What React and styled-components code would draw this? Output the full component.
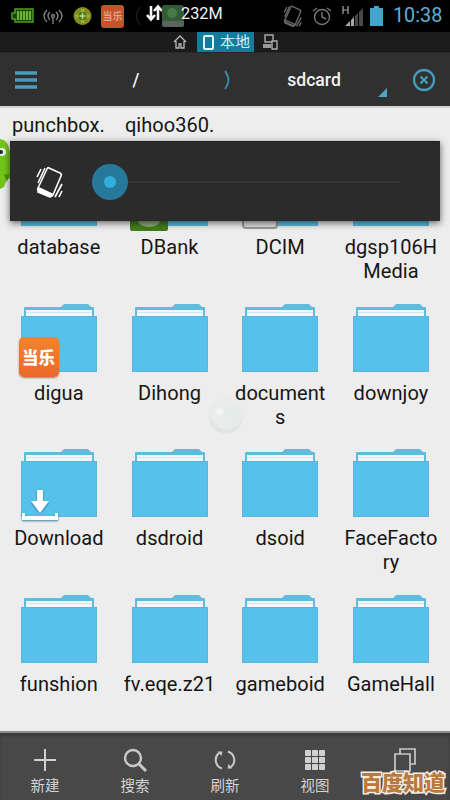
import React from "react";
import styled, { createGlobalStyle } from "styled-components";

const Global = createGlobalStyle`
  * { box-sizing: border-box; }
  body { margin: 0; background: #ededed; }
  svg { display: block; flex: none; overflow: visible; }
`;
const Screen = styled.div`
  position: relative; width: 450px; height: 800px; overflow: hidden;
  display: flex; flex-direction: column; background: #ededed;
  font-family: Roboto, "Noto Sans CJK SC", sans-serif;
`;
const StatusBar = styled.header`
  height: 32px; flex: none; background: #000; display: flex; align-items: center;
  justify-content: space-between; padding: 0 8px 0 11px;
`;
const StatusGroup = styled.div`
  display: flex; align-items: center; height: 32px;
`;
const StatusIcon = styled.div`
  width: ${(p) => p.$w}px; margin-left: ${(p) => p.$gap || 0}px; flex: none;
`;
const AppBadge = styled.div`
  width: 23px; height: 23px; margin-left: 9px; border-radius: 3px; background: #c4532b;
  color: #e1a188; font-size: 10px; line-height: 23px; text-align: center; font-weight: 700;
  white-space: nowrap;
`;
const Memory = styled.span`
  color: #f2f2f2; font-size: 16.3px; line-height: 20px; margin: -5px 0 0 -3px; z-index: 1;
`;
const Clock = styled.span`
  color: #5cb2cf; font-size: 19.8px; line-height: 32px; margin-left: 10px; width: 49px;
  white-space: nowrap;
`;
const TabBar = styled.nav`
  height: 20px; flex: none; background: #1b1b1b; display: flex; align-items: center;
  padding-left: 173px;
`;
const ActiveTab = styled.div`
  margin-left: 10px; width: 57px; height: 20px; background: #137c9c; color: #d4edf5;
  display: flex; align-items: center; gap: 6px; padding-left: 6px; font-size: 15px;
  line-height: 19px; white-space: nowrap; margin-right: 9px;
`;
const PathBar = styled.div`
  height: 54px; flex: none; background: #303030; border-top: 1px solid #292929;
  display: grid; grid-template-columns: 52px 168px 14px 160px 56px; align-items: center;
  color: #f3f3f3; font-size: 17.6px; font-weight: 500;
`;
const PathCell = styled.div`
  display: flex; align-items: center; justify-content: center;
`;
const Files = styled.main`
  flex: 1; min-height: 0; overflow: hidden; border-top: 2px solid #d3d3d3;
`;
const ScrolledLabels = styled.div`
  display: flex; height: 50px; padding: 5px 0 0 12px; gap: 20px;
`;
const Grid = styled.div`
  display: grid; grid-template-columns: repeat(4, 110.7px); grid-auto-rows: 145.7px;
  padding-left: 3.5px;
`;
const FileItem = styled.div`
  display: flex; flex-direction: column; align-items: center; position: relative;
`;
const Label = styled.div`
  color: #151515; font-size: 20px; line-height: 24px; letter-spacing: 0.05px; text-align: center;
  white-space: pre-line; margin-top: ${(p) => (p.$flush ? 0 : 8)}px;
`;
const Corner = styled.div`
  position: absolute; left: ${(p) => p.$left || 15}px; bottom: ${(p) => p.$bottom}px;
`;
const GameBadge = styled.div`
  width: 40px; height: 40px; border-radius: 5px; background: linear-gradient(#f18430, #ed672c);
  color: #fff; font: 900 16.5px/40px "Noto Sans CJK SC", sans-serif; text-align: center;
  white-space: nowrap; box-shadow: 0 1px 2px #a78265;
`;
const DriveBadge = styled.div`
  width: 38px; height: 40px; background: #437d1b; border-radius: 2px;
  display: flex; align-items: flex-end; justify-content: center; padding-bottom: 3px;
`;
const CameraBadge = styled.div`
  width: 36px; height: 36px; border: 2px solid #999; border-radius: 4px; background: #dedede;
`;
const BottomBar = styled.footer`
  height: 69px; flex: none; background: #484848; border-top: 2px solid #8c8c8c;
  box-shadow: inset 0 3px 3px #3c3c3c; display: grid; grid-template-columns: repeat(5, 90px);
`;
const Action = styled.button`
  border: 0; padding: 15px 0 0; background: none; color: #d4d4d4; display: flex;
  flex-direction: column; align-items: center; font: 400 14.5px/20px "Noto Sans CJK SC", sans-serif;
  gap: 3px;
`;
const VolumePanel = styled.section`
  position: absolute; left: 10px; top: 141px; width: 430px; height: 80px; background: #2b2b2b;
  border-top: 1px solid #202020; box-shadow: 0 2px 7px rgba(0,0,0,.6);
  display: flex; align-items: center; padding-left: 25px;
`;
const Slider = styled.div`
  margin-left: 27px; width: 320px; height: 36px; display: flex; align-items: center;
`;
const Thumb = styled.div`
  width: 36px; height: 36px; border-radius: 50%; background: #27799b; display: grid;
  place-items: center; flex: none;
`;
const ThumbCore = styled.div`
  width: 12px; height: 12px; border-radius: 50%; background: #35addc;
`;
const Track = styled.div`
  height: 2px; width: 272px; background: #363636;
`;
const Monster = styled.div`
  position: absolute; left: 0; top: 138px;
`;
const TouchDot = styled.div`
  position: absolute; left: 209px; top: 399px; width: 34px; height: 34px; border-radius: 50%;
  background: radial-gradient(circle at 60% 38%, #e4ecea 15%, #e9eceb 60%, #e5e7e6 75%);
  box-shadow: inset 0 -3px 3px #dfe1e0, 0 0 2px #e2e2e2;
  display: grid; place-items: center;
`;
const TouchGlint = styled.div`
  width: 7px; height: 7px; border-radius: 50%; background: #f5f7f7; margin: -10px 0 0 -14px;
  filter: blur(1px);
`;
const Watermark = styled.div`
  position: absolute; left: 361px; top: 767px; width: 88px; height: 28px; color: #b9793f;
  font: 900 21px/28px "Noto Sans CJK SC", sans-serif; white-space: nowrap;
  -webkit-text-stroke: 3px #f5eee1; paint-order: stroke fill;
`;
const DownloadArt = styled.svg`
  filter: drop-shadow(0 1px 1px #347d9b);
`;

const FolderIcon = () => (
  <svg width="76" height="69" viewBox="0 0 76 69">
    <path d="M3 12V4q0-1 1-1h36l3-3h24l3 3h2q1 0 1 1v8z" fill="#60bcdc" />
    <path d="M5 6h66v6H5z" fill="#f2f8fa" />
    <path d="M5 8.5h66" stroke="#d2e7ed" />
    <path d="M0 12h76v56H0z" fill="#56c1ea" />
    <path d="M.5 12v56M75.5 12v56M0 12.5h76M0 67.5h76" stroke="#5ab5d9" />
  </svg>
);
const DownloadIcon = () => (
  <DownloadArt width="38" height="34" viewBox="0 0 38 34">
    <path d="M16 2h6v11h6l-9 12-9-12h6zM1 25h3v3h30v-3h3v7H1z" fill="#fff" />
  </DownloadArt>
);
const PhoneShake = ({ dim }) => (
  <svg width={dim ? 22 : 30} height={dim ? 22 : 32} viewBox="0 0 30 32" fill="none" stroke={dim ? "#686868" : "#fff"} strokeWidth={dim ? 2 : 1.6}>
    <path d="m14 2 11 5q2 1 1 3l-8 19q-1 2-3 1L4 25q-2-1-1-3L12 3q1-2 2-1z" />
    <path d="m4 22 13 6-2 3-12-5z" fill={dim ? "none" : "#fff"} />
    <path d="M10 2 3 17M6 3 2 11M27 18l-7 13M27 25l-3 6" />
  </svg>
);

const files = [
  ["database"], ["DBank", "drive"], ["DCIM", "camera"], ["dgsp106H\nMedia"],
  ["digua", "game"], ["Dihong"], ["document\ns"], ["downjoy"],
  ["Download", "download"], ["dsdroid"], ["dsoid"], ["FaceFacto\nry"],
  ["funshion"], ["fv.eqe.z21"], ["gameboid"], ["GameHall"],
];

const Emblem = ({ kind }) => {
  if (kind === "game") return <Corner $bottom={72}><GameBadge>当乐</GameBadge></Corner>;
  if (kind === "download") return <Corner $left={17} $bottom={73}><DownloadIcon /></Corner>;
  if (kind === "drive") return <Corner $left={16} $bottom={73}><DriveBadge><svg width="24" height="14"><ellipse cx="12" cy="7" rx="11" ry="6" fill="#8fac79" /></svg></DriveBadge></Corner>;
  if (kind === "camera") return <Corner $left={17} $bottom={75}><CameraBadge /></Corner>;
  return null;
};

const actions = [
  { id: "new", label: "新建", icon: <svg width="24" height="24" stroke="#d0d0d0" strokeWidth="2"><path d="M12 1v22M1 12h22" /></svg> },
  { id: "search", label: "搜索", icon: <svg width="24" height="24" fill="none" stroke="#c9c9c9"><circle cx="10" cy="10" r="8" strokeWidth="2.4" /><path d="m16 16 7 7" strokeWidth="3" /></svg> },
  { id: "refresh", label: "刷新", icon: <svg width="24" height="24" fill="none" stroke="#c9c9c9" strokeWidth="2"><path d="M9 20.5A9 9 0 0 1 6 5M15 3.5a9 9 0 0 1 3 15.5" /><path d="M4.5 3.5h5l-1 4.5zM19.5 20.5h-5l1-4.5z" fill="#c9c9c9" stroke="none" /></svg> },
  { id: "view", label: "视图", icon: <svg width="24" height="24" fill="#d0d0d0">{[2, 9, 16].map((x) => [2, 9, 16].map((y) => <rect key={`${x}-${y}`} x={x} y={y} width="6" height="6" rx=".8" />))}</svg> },
  { id: "windows", icon: <svg width="24" height="24" fill="#484848" stroke="#c9c9c9" strokeWidth="1.7"><path d="M7 1h15v15H7z" /><path d="M2 6h15v17H2z" /></svg> },
];

export default function App() {
  return (
    <>
      <Global />
      <Screen>
        <StatusBar>
          <StatusGroup>
            <StatusIcon $w={23}><svg width="23" height="16"><path d="M4 1h18v13H4v-3H1V5h3z" fill="#163c08" stroke="#4f9c24" strokeWidth="1.5" /><path d="M7 3v9M10 3v9M13 3v9M16 3v9M19 3v9" stroke="#69b338" strokeWidth="2.3" /></svg></StatusIcon>
            <StatusIcon $w={20} $gap={9}><svg width="20" height="16" fill="none" stroke="#858585" strokeWidth="1.3"><circle cx="10" cy="8" r="1.5" /><path d="M7 4q-4 4 0 8M13 4q4 4 0 8M4 2q-6 6 0 12M16 2q6 6 0 12M10 10v6" /></svg></StatusIcon>
            <StatusIcon $w={19} $gap={10}><svg width="19" height="20"><circle cx="9.5" cy="10" r="9" fill="#858e1b" /><path d="M9.5 3v14M2.5 10h14" stroke="#a9ac39" strokeWidth="3" /><circle cx="9.5" cy="10" r="4" fill="#39782b" /><path d="M9.5 7v6M6.5 10h6" stroke="#dcd66a" strokeWidth="1.5" /></svg></StatusIcon>
            <AppBadge>当乐</AppBadge>
            <StatusIcon $w={10} $gap={9}><svg width="10" height="20" fill="none" stroke="#302635"><path d="M8 1Q-2 10 8 19" /></svg></StatusIcon>
            <StatusIcon $w={16} $gap={3}><svg width="16" height="20" fill="none" stroke="#f4f4f4" strokeWidth="2.6"><path d="M4.5 0v13M0.5 9l4 4.5 4-4.5M11.5 14V0M7.5 5l4-4.5L15.5 5" transform="translate(0.5 0)" /></svg></StatusIcon>
            <StatusIcon $w={22}><svg width="22" height="24"><rect y="1" width="22" height="17" rx="3" fill="#315c35" /><path d="M0 17h22v4q0 2-3 2H3q-3 0-3-2z" fill="#59645d" /><circle cx="10" cy="9" r="5" fill="#477a4a" /></svg></StatusIcon>
            <Memory>232M</Memory>
          </StatusGroup>
          <StatusGroup>
            <StatusIcon $w={22}><PhoneShake dim /></StatusIcon>
            <StatusIcon $w={20} $gap={8}><svg width="20" height="20" fill="none" stroke="#777" strokeWidth="1.4"><circle cx="10" cy="11" r="7.5" /><path d="M10 6v5l4 2M1 5l4-3M19 5l-4-3" /></svg></StatusIcon>
            <StatusIcon $w={22} $gap={10}><svg width="22" height="20"><path d="M1 0v8M6 0v8M1 4h5" stroke="#aaa" strokeWidth="1.2" /><path d="M3 20 8 15v5zM9 20v-6l3-3v9z" fill="#aaa" /><path d="M13 20V10l3-3v13zM17 20V6l4-4v18z" fill="#484848" /></svg></StatusIcon>
            <StatusIcon $w={13} $gap={6}><svg width="13" height="20"><path d="M4 0h5v2h4v18H0V2h4z" fill="#40a6cb" /></svg></StatusIcon>
            <Clock>10:38</Clock>
          </StatusGroup>
        </StatusBar>
        <TabBar>
          <svg width="14" height="14" fill="none" stroke="#bbb" strokeWidth="1.3"><path d="m1 7 6-6 6 6M3 6v7h3V9h2v4h3V6" /></svg>
          <ActiveTab><svg width="11" height="15" fill="none" stroke="#e1f1f6" strokeWidth="2"><rect x="1" y="1" width="9" height="13" rx="1" /></svg>本地</ActiveTab>
          <svg width="16" height="16" fill="none" stroke="#aaa" strokeWidth="1.4"><path d="M2 1h8v7H2z" /><path d="M0 10h8v4H0z" fill="#999" stroke="none" /><path d="M9 7h5v8H9z" fill="#1b1b1b" /></svg>
        </TabBar>
        <PathBar>
          <PathCell><svg width="22" height="18" stroke="#4b9bbd" strokeWidth="3.5"><path d="M0 2h22M0 9h22M0 16h22" /></svg></PathCell>
          <PathCell>/</PathCell>
          <PathCell><svg width="6" height="20" fill="none" stroke="#398db0" strokeWidth="1.9"><path d="M1 1q1 1 3 6 1 3 0 6-2 5-3 6" /></svg></PathCell>
          <PathCell>sdcard</PathCell>
          <PathCell><svg width="24" height="24" fill="none" stroke="#429cba" strokeWidth="2.3"><circle cx="14" cy="12" r="10" /><path d="m10.5 8.5 7 7M17.5 8.5l-7 7" /><path d="M-23 20v9h-9z" fill="#4ba8c9" stroke="none" /></svg></PathCell>
        </PathBar>
        <Files>
          <ScrolledLabels><Label $flush>punchbox.</Label><Label $flush>qihoo360.</Label></ScrolledLabels>
          <Grid>{files.map(([name, kind]) => <FileItem key={name}><FolderIcon /><Emblem kind={kind} /><Label>{name}</Label></FileItem>)}</Grid>
        </Files>
        <BottomBar>{actions.map(({ id, label, icon }) => <Action key={id}>{icon}{label}</Action>)}</BottomBar>
        <Monster><svg width="12" height="51"><path d="M0 1q8 1 9 10l3 9v20l-5 1-3 8-4 2z" fill="#73c51b" /><circle cx="2" cy="14" r="4" fill="#e8f4e6" /><circle cx="1" cy="14" r="2" fill="#182b24" /><path d="M4 36l5 1-2 7z" fill="#438f17" /></svg></Monster>
        <VolumePanel><PhoneShake /><Slider><Thumb><ThumbCore /></Thumb><Track /></Slider></VolumePanel>
        <TouchDot><TouchGlint /></TouchDot>
        <Watermark>百度知道</Watermark>
      </Screen>
    </>
  );
}
